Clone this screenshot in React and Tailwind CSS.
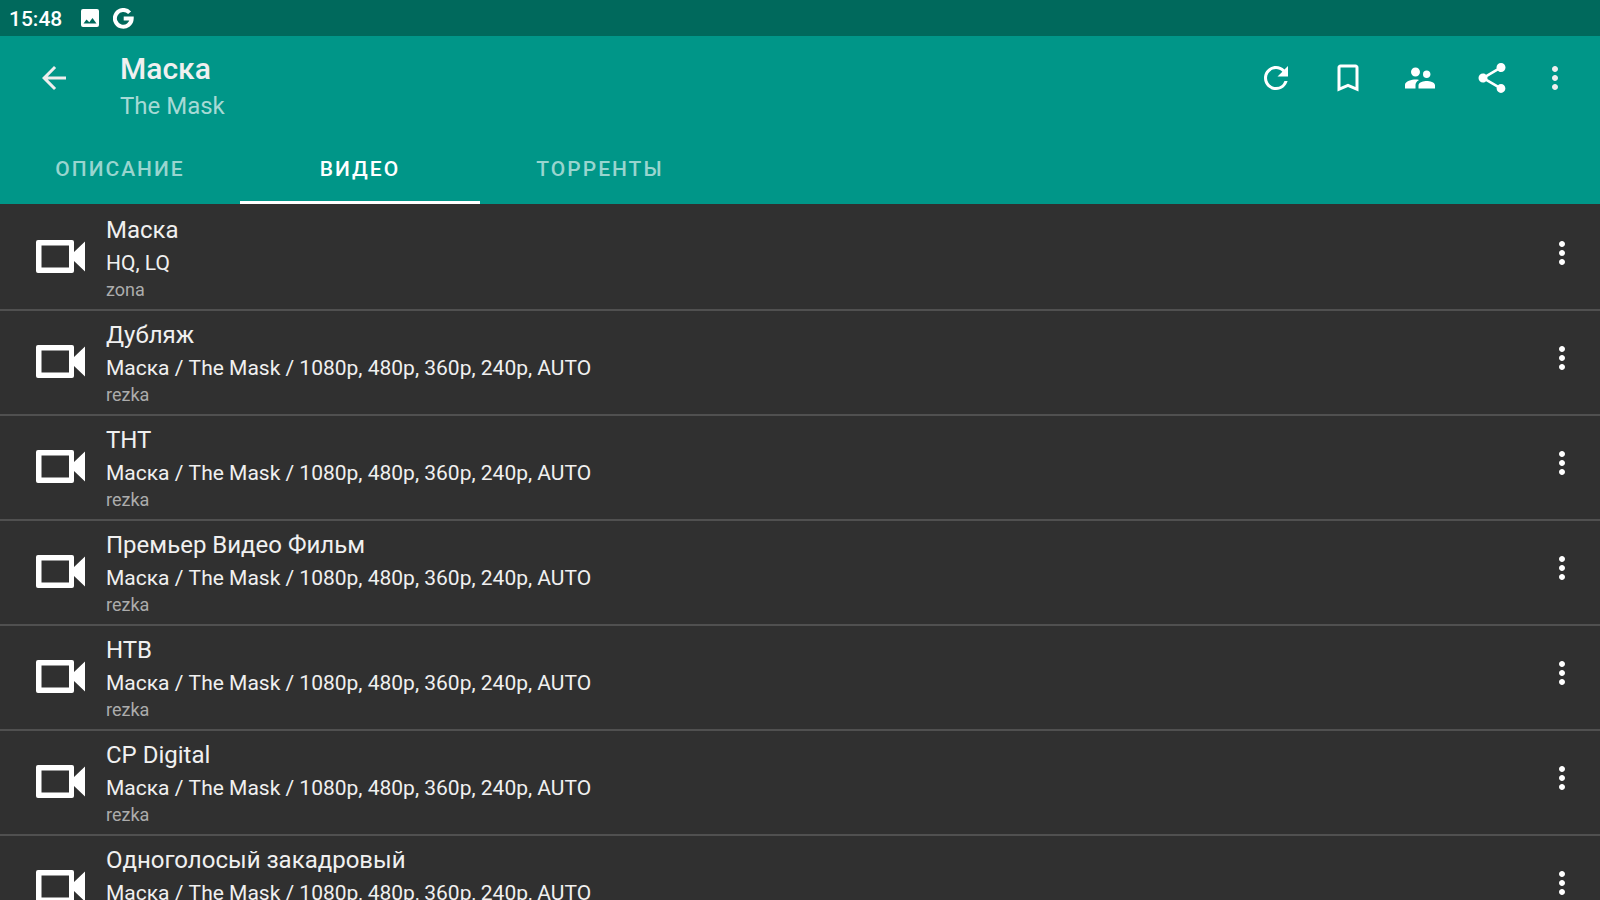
import React from "react";
import {
  MdArrowBack,
  MdRefresh,
  MdBookmarkBorder,
  MdSupervisorAccount,
  MdShare,
  MdMoreVert,
} from "react-icons/md";

const QUALITIES = "Маска / The Mask / 1080p, 480p, 360p, 240p, AUTO";

const videos = [
  { title: "Маска", details: "HQ, LQ", source: "zona" },
  { title: "Дубляж", details: QUALITIES, source: "rezka" },
  { title: "ТНТ", details: QUALITIES, source: "rezka" },
  { title: "Премьер Видео Фильм", details: QUALITIES, source: "rezka" },
  { title: "НТВ", details: QUALITIES, source: "rezka" },
  { title: "CP Digital", details: QUALITIES, source: "rezka" },
  { title: "Одноголосый закадровый", details: QUALITIES, source: "rezka" },
];

const actions = [
  { label: "Обновить", Icon: MdRefresh },
  { label: "В закладки", Icon: MdBookmarkBorder },
  { label: "Похожие", Icon: MdSupervisorAccount },
  { label: "Поделиться", Icon: MdShare },
];

const tabs = ["ОПИСАНИЕ", "ВИДЕО", "ТОРРЕНТЫ"];

function PictureIcon() {
  return (
    <svg viewBox="0 0 18 18" className="size-[18px]" fill="currentColor" aria-hidden="true">
      <path
        fillRule="evenodd"
        d="M2 0h14a2 2 0 0 1 2 2v14a2 2 0 0 1-2 2H2a2 2 0 0 1-2-2V2a2 2 0 0 1 2-2zM5.5 10.5 2.500 14.500h13l-4-5.500-3.200 4.200z"
      />
    </svg>
  );
}

function GoogleIcon() {
  return (
    <svg viewBox="0 0 21 21" className="size-[21px]" fill="none" stroke="currentColor" strokeWidth="4" aria-hidden="true">
      <path d="M16.6 4.800A8.400 8.400 0 1 0 18.700 10.500H10.700" />
    </svg>
  );
}

function CameraIcon() {
  return (
    <svg viewBox="0 0 49 33" className="mb-0.5 h-[33px] w-[49px] shrink-0 text-white" fill="currentColor" aria-hidden="true">
      <path
        fillRule="evenodd"
        d="M2 0h34a2 2 0 0 1 2 2v10L49 1.500v30L38 21v10a2 2 0 0 1-2 2H2a2 2 0 0 1-2-2V2a2 2 0 0 1 2-2zM5.500 5.500v22h27.500v-22z"
      />
    </svg>
  );
}

function StatusBar() {
  return (
    <div className="flex h-9 items-center bg-[#00695c] px-[9px] text-[21px] font-medium leading-6 text-white">
      <time className="w-[72px] pt-0.5">15:48</time>
      <span className="mr-3.5"><PictureIcon /></span>
      <GoogleIcon />
    </div>
  );
}

function Header() {
  return (
    <header className="bg-[#009688]">
      <div className="flex items-start">
        <button type="button" aria-label="Назад" className="flex h-[84px] w-[108px] items-center pl-9 text-[#eeeeee]">
          <MdArrowBack className="size-9" />
        </button>
        <div className="flex-1 pb-3 pl-3 pt-[15px]">
          <h1 className="text-[30px] font-medium leading-[35px] text-[#f0f0f0]">Маска</h1>
          <p className="mt-1.5 text-[24px] leading-7 text-[#a6dad5]">The Mask</p>
        </div>
        <div className="flex pr-[18px] text-white">
          {actions.map(({ label, Icon }) => (
            <button key={label} type="button" aria-label={label} className="flex h-[84px] w-[72px] items-center justify-center">
              <Icon className="size-9" />
            </button>
          ))}
          <button type="button" aria-label="Ещё" className="flex h-[84px] w-[54px] items-center justify-center text-[#eeeeee]">
            <MdMoreVert className="size-9" />
          </button>
        </div>
      </div>
      <div role="tablist" className="flex">
        {tabs.map((tab) => (
          <button
            key={tab}
            type="button"
            role="tab"
            aria-selected={tab === "ВИДЕО"}
            className="h-[72px] w-60 border-b-[3px] border-transparent pt-1.5 text-[21px] font-medium tracking-[2px] text-[#99d5cf] aria-selected:border-white aria-selected:text-white"
          >
            {tab}
          </button>
        ))}
      </div>
    </header>
  );
}

function VideoRow({ title, details, source }) {
  return (
    <li className="flex items-center border-b-2 border-[#505050] pl-9 pr-5">
      <CameraIcon />
      <div className="min-w-0 flex-1 pb-[9px] pl-[21px] pt-2.5">
        <h2 className="text-[24px] leading-7 text-[#f0f0f0]">{title}</h2>
        <p className="mt-[7px] text-[21px] leading-[25px] text-[#f0f0f0]">{details}</p>
        <p className="mt-[3px] text-[18px] leading-[21px] text-[#acacac]">{source}</p>
      </div>
      <button type="button" aria-label={`Меню: ${title}`} className="pb-2.5 text-white">
        <MdMoreVert className="size-9" />
      </button>
    </li>
  );
}

export default function App() {
  return (
    <div className="flex h-screen flex-col bg-[#303030] font-['Roboto',sans-serif]">
      <StatusBar />
      <Header />
      <ul className="min-h-0 flex-1 overflow-y-auto pt-0.5 [scrollbar-width:none]">
        {videos.map((video) => (
          <VideoRow key={video.title} {...video} />
        ))}
      </ul>
    </div>
  );
}
